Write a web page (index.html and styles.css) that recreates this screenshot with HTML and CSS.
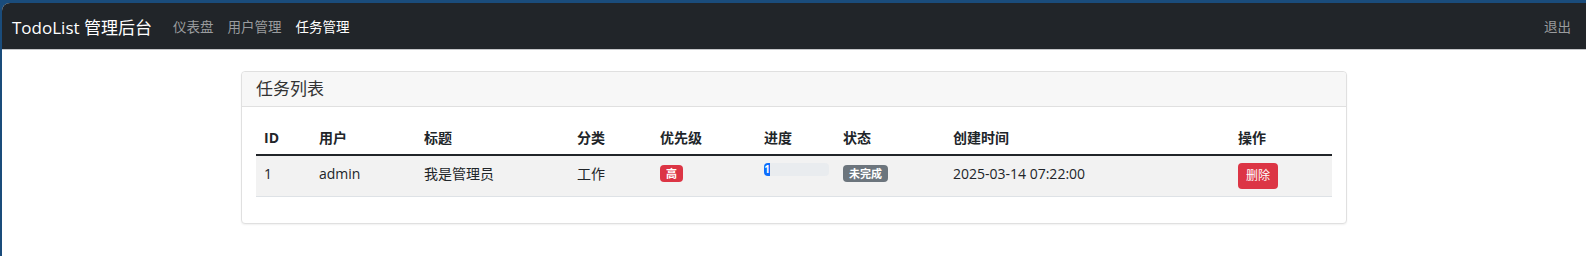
FILE: index.html
```html
<!DOCTYPE html>
<html lang="zh-CN">
<head>
    <meta charset="utf-8" />
    <meta name="viewport" content="width=device-width, initial-scale=1.0" />
    <title>TodoList 管理后台 - 任务管理</title>
    <link rel="stylesheet" href="styles.css">
</head>
<body>
    <div class="frame">
        <div class="window">
            <nav class="navbar">
                <a href="#" class="brand">TodoList 管理后台</a>
                <ul class="nav-links">
                    <li><a href="#" class="nav-link">仪表盘</a></li>
                    <li><a href="#" class="nav-link">用户管理</a></li>
                    <li><a href="#" class="nav-link active">任务管理</a></li>
                </ul>
                <a href="#" class="nav-link logout">退出</a>
            </nav>

            <main class="main">
                <div class="card">
                    <div class="card-header">任务列表</div>
                    <div class="card-body">
                        <table class="table">
                            <thead>
                                <tr>
                                    <th class="col-id">ID</th>
                                    <th class="col-user">用户</th>
                                    <th class="col-title">标题</th>
                                    <th class="col-cat">分类</th>
                                    <th class="col-prio">优先级</th>
                                    <th class="col-prog">进度</th>
                                    <th class="col-status">状态</th>
                                    <th class="col-time">创建时间</th>
                                    <th class="col-op">操作</th>
                                </tr>
                            </thead>
                            <tbody>
                                <tr>
                                    <td>1</td>
                                    <td>admin</td>
                                    <td>我是管理员</td>
                                    <td>工作</td>
                                    <td><span class="badge badge-danger">高</span></td>
                                    <td>
                                        <div class="progress">
                                            <div class="progress-bar">1</div>
                                        </div>
                                    </td>
                                    <td><span class="badge badge-secondary">未完成</span></td>
                                    <td>2025-03-14 07:22:00</td>
                                    <td><button type="button" class="btn-delete">删除</button></td>
                                </tr>
                            </tbody>
                        </table>
                    </div>
                </div>
            </main>
        </div>
    </div>
</body>
</html>
```

FILE: styles.css
```css
html, body {
    margin: 0;
    padding: 0;
    height: 100%;
}

body {
    font-family: "Open Sans", "Noto Sans CJK SC", sans-serif;
    font-size: 14px;
    color: #212529;
    background-color: #1a4c7b;
}

.frame {
    padding: 3px 0 0 2px;
    min-height: 100%;
    box-sizing: border-box;
    display: flex;
}

.window {
    flex: 1;
    background-color: #fff;
    border-top-left-radius: 8px;
    overflow: hidden;
}

/* navbar */
.navbar {
    background-color: #212529;
    height: 46px;
    display: flex;
    align-items: center;
    padding: 0 15px 0 10px;
    border-bottom: 1px solid #c4c6c8;
}

.brand {
    color: #fff;
    text-decoration: none;
    font-size: 17px;
    margin-right: 14px;
}

.nav-links {
    list-style: none;
    margin: 0;
    padding: 0;
    display: flex;
    flex: 1;
}

.nav-link {
    display: block;
    color: #9a9c9e;
    text-decoration: none;
    font-size: 13.5px;
    padding: 0 7px;
}

.nav-link.active {
    color: #fff;
}

.logout {
    padding: 0;
}

/* content */
.main {
    padding-top: 21px;
}

.card {
    width: 1106px;
    margin: 0 auto;
    box-sizing: border-box;
    border: 1px solid #e0e0e0;
    border-radius: 4px;
    background-color: #fff;
    box-shadow: 0 1px 2px rgba(0, 0, 0, 0.06);
}

.card-header {
    background-color: #f7f7f7;
    border-bottom: 1px solid #e0e0e0;
    padding: 7px 14px;
    font-size: 17px;
    line-height: 20px;
    color: #333;
    border-radius: 4px 4px 0 0;
}

.card-body {
    padding: 14px;
}

.table {
    width: 100%;
    border-collapse: collapse;
    table-layout: fixed;
    margin-bottom: 12px;
}

.table th {
    text-align: left;
    font-weight: bold;
    padding: 6px 8px;
    line-height: 21px;
    border-bottom: 2px solid #212529;
}

.table td {
    padding: 7px 8px;
    line-height: 21px;
    vertical-align: top;
    background-color: #f2f2f2;
    border-bottom: 1px solid #dee2e6;
}

/* widths exclude the 16px cell padding */
.col-id { width: 39px; }
.col-user { width: 89px; }
.col-title { width: 137px; }
.col-cat { width: 67px; }
.col-prio { width: 88px; }
.col-prog { width: 63px; }
.col-status { width: 94px; }
.col-time { width: 269px; }
.col-op { width: 86px; }

.badge {
    display: inline-block;
    font-size: 11px;
    font-weight: bold;
    line-height: 11px;
    padding: 3px 6px;
    color: #fff;
    border-radius: 4px;
    vertical-align: 1px;
}

.badge-danger {
    background-color: #dc3545;
}

.badge-secondary {
    background-color: #6c757d;
}

.progress {
    width: 65px;
    height: 13px;
    background-color: #e9ecef;
    border-radius: 4px;
    overflow: hidden;
    display: flex;
}

.progress-bar {
    width: 6px;
    background-color: #0d6efd;
    color: #fff;
    font-size: 10px;
    font-weight: bold;
    line-height: 13px;
    text-align: center;
}

.btn-delete {
    font-family: inherit;
    font-size: 12px;
    line-height: 18px;
    padding: 4px 8px;
    color: #fff;
    background-color: #dc3545;
    border: none;
    border-radius: 4px;
    cursor: pointer;
}
```
